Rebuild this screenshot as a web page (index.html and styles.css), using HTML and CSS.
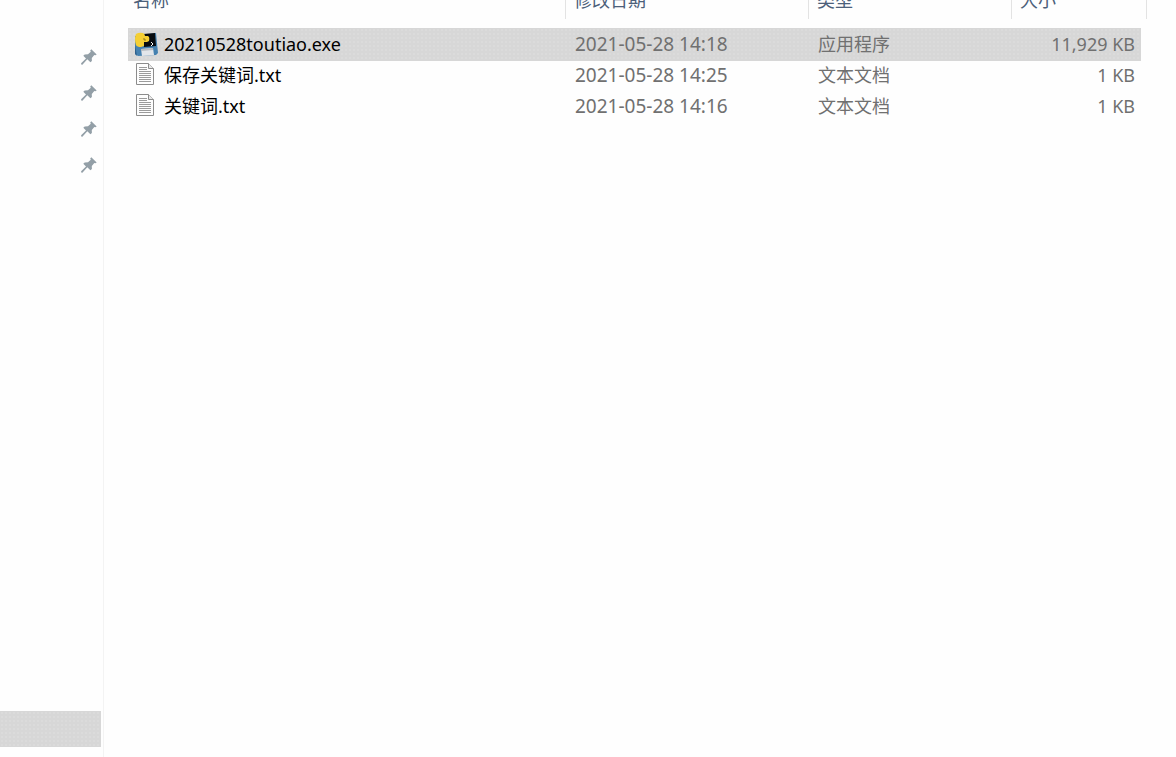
FILE: index.html
```html
<!DOCTYPE html>
<html lang="zh-CN">
<head>
    <meta charset="UTF-8">
    <meta name="viewport" content="width=device-width, initial-scale=1.0">
    <title>文件列表</title>
    <link rel="stylesheet" href="styles.css">
</head>
<body>
    <svg class="symbols" aria-hidden="true">
        <symbol id="pin" viewBox="0 0 16 16">
            <path d="M10.3 0.3 L15.7 5.5 L14.4 6.3 L13.3 5.9 L10.8 9 L10.9 12 L9.4 13.2 L6.3 10.3 L1.4 15.7 L0.2 15.5 L0.1 14.2 L5 9.5 L2.3 6.7 L3.7 5.4 L7 5.2 L9.8 2.7 L9.2 1.4 Z"/>
        </symbol>
        <symbol id="text-file" viewBox="0 0 18 22">
            <path fill="#fdfdfd" stroke="#8c8c8c" d="M.5.5h12l5 5v16H.5z"/>
            <path fill="#e8e8e8" stroke="#8c8c8c" d="M12.5.5v5h5"/>
            <path fill="none" stroke="#9b9b9b" d="M3 4.5h8M3 6.5h8M3 8.5h12M3 10.5h12M3 12.5h12M3 14.5h12M3 16.5h12M3 18.5h12"/>
        </symbol>
    </svg>

    <div class="explorer">
        <nav class="sidebar">
            <ul class="pins">
                <li><svg class="pin"><use href="#pin"/></svg></li>
                <li><svg class="pin"><use href="#pin"/></svg></li>
                <li><svg class="pin"><use href="#pin"/></svg></li>
                <li><svg class="pin"><use href="#pin"/></svg></li>
            </ul>
            <div class="current"></div>
        </nav>

        <main class="files">
            <table>
                <colgroup>
                    <col>
                    <col class="col-date">
                    <col class="col-type">
                    <col class="col-size">
                </colgroup>
                <thead>
                    <tr>
                        <th>名称</th>
                        <th>修改日期</th>
                        <th>类型</th>
                        <th>大小</th>
                    </tr>
                </thead>
                <tbody>
                    <tr class="selected">
                        <td class="name">
                            <div class="file">
                                <svg class="icon" viewBox="0 0 24 24">
                                    <path fill="#4581b0" d="M1 4 L22 1 L24 21 L22 23 L4 24 L1 22 Z"/>
                                    <path fill="#2e608c" d="M1 13 L3 24 L1 22 Z"/>
                                    <path fill="#080c10" d="M9 2 L21 1 L22 14 L10 15 Z"/>
                                    <path fill="#e3e6ea" d="M7 17 L19 16 L20 23 L8 24 Z"/>
                                    <path fill="#b4bac0" d="M7 17 L19 16 V18 L7 19 Z"/>
                                    <path fill="#f5cf33" d="M2 2 Q5 0 9 1 Q11 2 11 4 H14 Q16 5 15 9 L13 10 H10 V14 L7 15 Q3 15 2 13 Q0 7 2 2 Z"/>
                                    <path fill="none" stroke="#7b6415" stroke-width=".8" d="M10 6v2h2"/>
                                    <path fill="none" stroke="#fff" d="M17 10l2 2-2 2"/>
                                </svg>
                                <span>20210528toutiao.exe</span>
                            </div>
                        </td>
                        <td class="date">2021-05-28 14:18</td>
                        <td>应用程序</td>
                        <td class="size">11,929 KB</td>
                    </tr>
                    <tr>
                        <td class="name">
                            <div class="file">
                                <svg class="icon"><use href="#text-file" width="22" height="22"/></svg>
                                <span>保存关键词.txt</span>
                            </div>
                        </td>
                        <td class="date">2021-05-28 14:25</td>
                        <td>文本文档</td>
                        <td class="size">1 KB</td>
                    </tr>
                    <tr>
                        <td class="name">
                            <div class="file">
                                <svg class="icon"><use href="#text-file" width="22" height="22"/></svg>
                                <span>关键词.txt</span>
                            </div>
                        </td>
                        <td class="date">2021-05-28 14:16</td>
                        <td>文本文档</td>
                        <td class="size">1 KB</td>
                    </tr>
                </tbody>
            </table>
        </main>
    </div>
</body>
</html>
```
FILE: styles.css
```css
:root {
    --page: #fefefe;
    --line: #e3e3e3;
    --selected: #d7d7d7;
    --muted: #707070;
    --heading: #4c607a;
}

* {
    margin: 0;
    padding: 0;
    box-sizing: border-box;
}

body {
    background-color: var(--page);
    color: #000;
    font-family: "Noto Sans", "Noto Sans CJK SC", sans-serif;
    font-size: 18px;
    line-height: 24px;
}

.symbols {
    display: none;
}

.explorer {
    display: flex;
    min-height: 100vh;
}

/* quick access column */
.sidebar {
    display: flex;
    flex-direction: column;
    flex: none;
    width: 104px;
    padding: 39px 2px 10px 0;
    border-right: 1px solid #f3f3f3;
}

.pins {
    list-style: none;
}

.pins li {
    display: flex;
    align-items: center;
    justify-content: flex-end;
    height: 36px;
    padding-right: 4px;
}

.pin {
    width: 16px;
    height: 16px;
    fill: #939fa7;
}

.current {
    height: 36px;
    margin-top: auto;
}

.current,
.selected {
    background-color: var(--selected);
    background-image: radial-gradient(circle, #dbdbdb 1px, transparent 1px);
    background-size: 4px 4px;
}

.selected {
    box-shadow: 0 2px 0 var(--selected);
}

/* the heading row is scrolled halfway out of view */
.files {
    flex: 1;
    overflow: hidden;
    padding: 0 35px 0 24px;
}

table {
    width: 100%;
    margin-top: -12px;
    border-collapse: separate;
    border-spacing: 0;
    table-layout: fixed;
}

.col-date {
    width: 243px;
}

.col-type {
    width: 203px;
}

.col-size {
    width: 130px;
}

th {
    height: 31px;
    padding: 0 0 0 8px;
    border-left: 1px solid var(--line);
    color: var(--heading);
    font-weight: 400;
    text-align: left;
    vertical-align: top;
}

th:first-child {
    padding-left: 5px;
    border-left: none;
}

th:last-child {
    box-shadow: 5px 0 0 var(--page), 6px 0 0 var(--line);
}

/* space between the headings and the first file */
tbody::before {
    content: "";
    display: table-row;
    height: 9px;
}

td {
    height: 31px;
    padding-left: 10px;
    color: var(--muted);
    white-space: nowrap;
}

.name {
    padding-left: 6px;
    color: #000;
}

.file {
    display: flex;
    align-items: center;
    gap: 6px;
}

.icon {
    flex: none;
    width: 24px;
    height: 24px;
}

.date {
    font-size: 19px;
}

.size {
    padding: 0 6px 0 0;
    text-align: right;
}
```
